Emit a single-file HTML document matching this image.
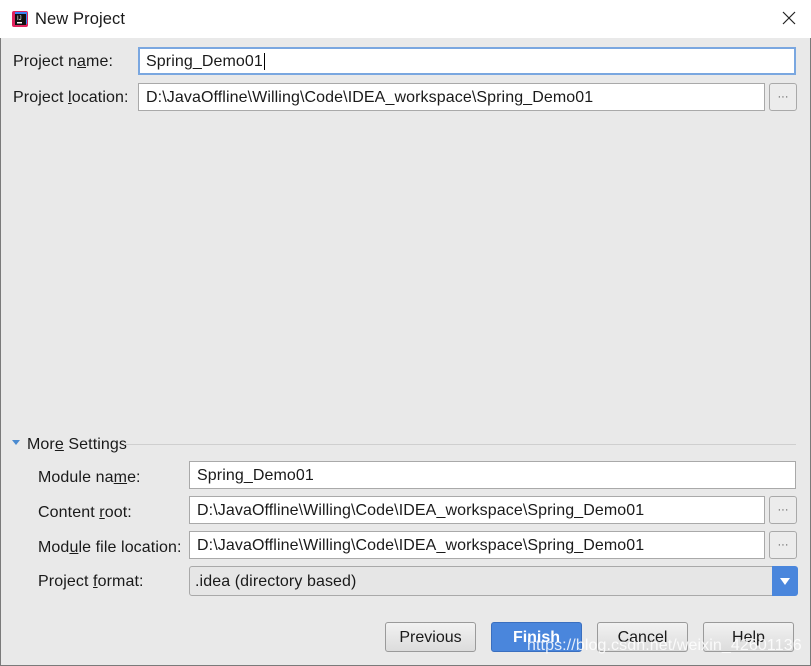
<!DOCTYPE html>
<html><head><style>
*{margin:0;padding:0;box-sizing:border-box}
body{width:811px;height:666px;background:#e9e9e9;font-family:"Liberation Sans","Noto Sans CJK SC",sans-serif;font-size:16px;color:#1a1a1a;position:relative;overflow:hidden}
.a{position:absolute}
.title{left:0;top:0;width:811px;height:38px;background:#fff}
.lbl{position:absolute;line-height:18px;white-space:nowrap;letter-spacing:0.1px}
.in{position:absolute;background:#fff;border:1px solid #a9a9a9;padding-left:7px;line-height:27px;white-space:nowrap;overflow:hidden;letter-spacing:0.1px}
.dot{position:absolute;width:28px;height:28px;border:1px solid #a9a9a9;border-radius:3px;background:#ececec;font-size:11px;text-align:center;line-height:26px;color:#555}
.btn{position:absolute;top:622px;width:91px;height:30px;border:1px solid #9a9a9a;border-radius:3px;background:linear-gradient(#f2f2f2,#dcdcdc);text-align:center;line-height:30px;font-size:16px}
u{text-decoration:underline}
</style></head><body>
<div class="a" style="left:0;top:0;width:1px;height:666px;background:#7a7a7a"></div>
<div class="a" style="right:0;top:0;width:1px;height:666px;background:#7a7a7a"></div>
<div class="a" style="left:0;bottom:0;width:811px;height:1px;background:#7a7a7a"></div>
<div class="a title"></div>
<svg class="a" style="left:12px;top:11px" width="16" height="16"><rect x="0" y="0" width="16" height="16" rx="2" fill="#e0245e"/><rect x="3" y="1" width="12" height="12" fill="#3b82f6"/><rect x="3" y="3" width="11" height="11" fill="#111"/><rect x="5" y="11" width="5" height="1.5" fill="#fff"/><text x="5" y="9" font-size="6" fill="#fff" font-family="Liberation Sans">IJ</text></svg>
<div class="lbl" style="left:35px;top:10px;font-size:16.5px">New Project</div>
<svg class="a" style="left:782px;top:11px" width="14" height="14"><path d="M1 1L13 13M13 1L1 13" stroke="#222" stroke-width="1.2"/></svg>

<div class="lbl" style="left:13px;top:53px">Project n<u>a</u>me:</div>
<div class="in" style="left:138px;top:47px;width:658px;height:28px;border:2px solid #7aa7e0;padding-left:6px;line-height:26px">Spring_Demo01<span style="border-left:1px solid #000;margin-left:1px"></span></div>
<div class="lbl" style="left:13px;top:89px">Project <u>l</u>ocation:</div>
<div class="in" style="left:138px;top:83px;width:627px;height:28px">D:\JavaOffline\Willing\Code\IDEA_workspace\Spring_Demo01</div>
<div class="dot" style="left:769px;top:83px">···</div>

<svg class="a" style="left:12px;top:440px" width="10" height="8"><path d="M0 0L8 0L4 5Z" fill="#4a8ad0"/></svg>
<div class="lbl" style="left:27px;top:436px">Mor<u>e</u> Settings</div>
<div class="a" style="left:124px;top:444px;width:672px;height:1px;background:#cfcfcf"></div>

<div class="lbl" style="left:38px;top:469px">Module na<u>m</u>e:</div>
<div class="in" style="left:189px;top:461px;width:607px;height:28px">Spring_Demo01</div>
<div class="lbl" style="left:38px;top:504px">Content <u>r</u>oot:</div>
<div class="in" style="left:189px;top:496px;width:576px;height:28px">D:\JavaOffline\Willing\Code\IDEA_workspace\Spring_Demo01</div>
<div class="dot" style="left:769px;top:496px">···</div>
<div class="lbl" style="left:38px;top:539px">Mod<u>u</u>le file location:</div>
<div class="in" style="left:189px;top:531px;width:576px;height:28px">D:\JavaOffline\Willing\Code\IDEA_workspace\Spring_Demo01</div>
<div class="dot" style="left:769px;top:531px">···</div>
<div class="lbl" style="left:38px;top:573px">Project <u>f</u>ormat:</div>
<div class="in" style="left:189px;top:566px;width:584px;height:30px;background:#e6e6e6;border-radius:3px 0 0 3px;line-height:29px;padding-left:5px">.idea (directory based)</div>
<div class="a" style="left:772px;top:566px;width:26px;height:30px;background:#4a86dc;border-radius:0 3px 3px 0"></div>
<svg class="a" style="left:780px;top:578px" width="10" height="8"><path d="M0 0L10 0L5 7Z" fill="#fff"/></svg>

<div class="btn" style="left:385px">Previous</div>
<div class="btn" style="left:491px;background:#4a86dc;border-color:#3a6fbf;color:#fff;font-weight:bold">Finish</div>
<div class="btn" style="left:597px">Cancel</div>
<div class="btn" style="left:703px">Help</div>
<div class="lbl" style="left:527px;top:637px;color:rgba(255,255,255,0.85);font-size:16px">https://blog.csdn.net/weixin_42601136</div>
</body></html>
